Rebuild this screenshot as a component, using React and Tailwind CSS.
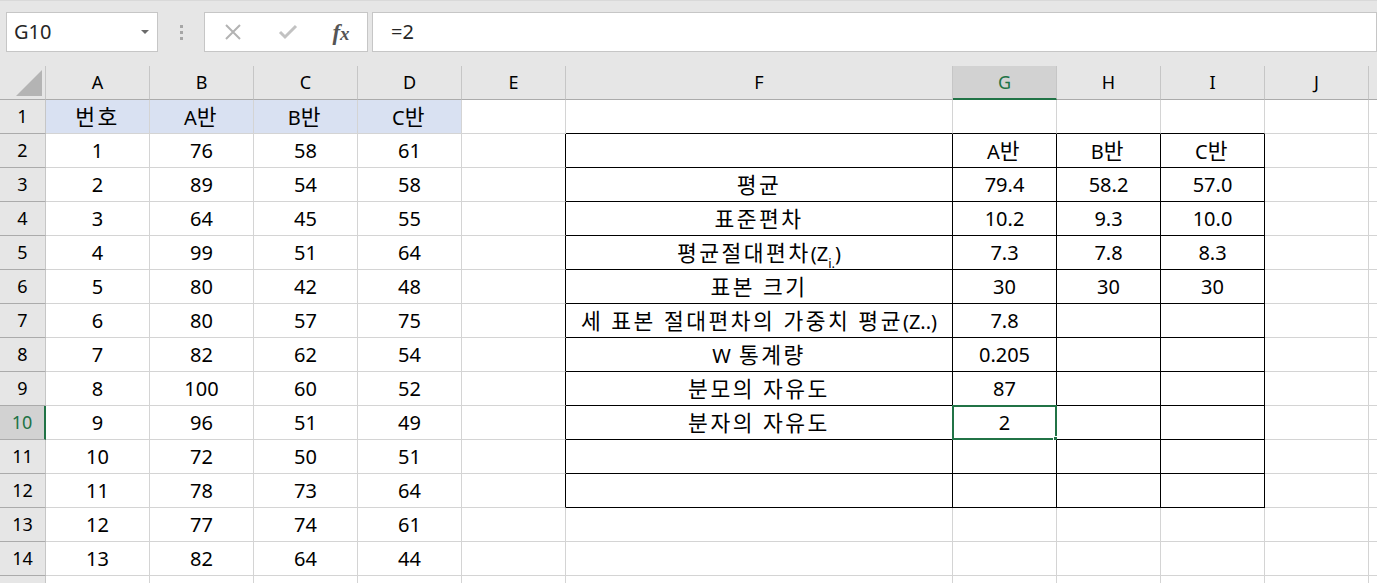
import React from "react";

const FONT = { fontFamily: '"Noto Sans", "Noto Sans CJK KR", sans-serif' };

const colKeys = ["A", "B", "C", "D", "E", "F", "G", "H", "I", "J", "K"];

const left = {
  A: ["번호", "1", "2", "3", "4", "5", "6", "7", "8", "9", "10", "11", "12", "13"],
  B: ["A반", "76", "89", "64", "99", "80", "80", "82", "100", "96", "72", "78", "77", "82"],
  C: ["B반", "58", "54", "45", "51", "42", "57", "62", "60", "51", "50", "73", "74", "64"],
  D: ["C반", "61", "58", "55", "64", "48", "75", "54", "52", "49", "51", "64", "61", "44"],
};

const labels = [
  "",
  "평균",
  "표준편차",
  "zi",
  "표본 크기",
  "세 표본 절대편차의 가중치 평균(Z..)",
  "W 통계량",
  "분모의 자유도",
  "분자의 자유도",
  "",
  "",
];

const stats = {
  G: ["A반", "79.4", "10.2", "7.3", "30", "7.8", "0.205", "87", "2", "", ""],
  H: ["B반", "58.2", "9.3", "7.8", "30", "", "", "", "", "", ""],
  I: ["C반", "57.0", "10.0", "8.3", "30", "", "", "", "", "", ""],
};

const inTable = (r, c) => r >= 2 && r <= 12 && ["F", "G", "H", "I"].includes(c);

// Hangul glyphs in the sheet run a bit wider than the latin ones
function Txt({ s }) {
  return s.split(/([가-힣 ]+)/).map((part, i) =>
    /[가-힣]/.test(part) ? (
      <span key={i} className="text-[21.5px] tracking-[2.5px]">
        {part}
      </span>
    ) : (
      <span key={i}>{part}</span>
    )
  );
}

function cellValue(r, c) {
  if (left[c]) return <Txt s={left[c][r - 1] || ""} />;
  if (r >= 2 && r <= 12) {
    if (c === "F") {
      const t = labels[r - 2];
      if (t === "zi")
        return (
          <span>
            <Txt s="평균절대편차" />
            (Z<sub className="text-[13px] align-[-4px]">i.</sub>)
          </span>
        );
      return <Txt s={t} />;
    }
    if (stats[c]) return <Txt s={stats[c][r - 2]} />;
  }
  return "";
}

function Cell({ r, c }) {
  const rightBlack = inTable(r, c) || (c === "E" && r >= 2 && r <= 12);
  const bottomBlack = inTable(r, c) || (r === 1 && ["F", "G", "H", "I"].includes(c));
  const blue = r === 1 && ["A", "B", "C", "D"].includes(c);
  const selected = r === 10 && c === "G";
  return (
    <div
      className={`relative h-[34px] flex items-center justify-center border-r border-b text-[20px] text-black whitespace-nowrap ${
        rightBlack ? "border-r-black" : "border-r-[#d4d4d4]"
      } ${bottomBlack ? "border-b-black" : "border-b-[#d4d4d4]"} ${
        blue ? "bg-[#d9e1f2]" : "bg-white"
      }`}
    >
      <span className="leading-none">{cellValue(r, c)}</span>
      {selected && (
        <>
          <div className="absolute -left-px -top-px w-[105px] h-[35px] border-2 border-[#217346]" />
          <div className="absolute -right-[4px] -bottom-[4px] w-[7px] h-[7px] bg-[#217346] border border-white" />
        </>
      )}
    </div>
  );
}

export default function App() {
  const rows = Array.from({ length: 14 }, (_, i) => i + 1);
  return (
    <div className="w-[1377px] h-[583px] overflow-hidden bg-white select-none" style={FONT}>
      {/* formula bar */}
      <div className="h-[66px] bg-[#e6e6e6] flex items-start pt-[11px] pl-[6px] border-t border-[#d9d9d9]">
        <div className="w-[152px] h-[40px] bg-white border border-[#c6c6c6] flex items-center justify-between pl-[7px] pr-[8px]">
          <span className="text-[20px] text-[#262626]">G10</span>
          <svg width="8" height="5" viewBox="0 0 8 5">
            <path d="M0 0 L8 0 L4 4 Z" fill="#6b6b6b" />
          </svg>
        </div>
        <div className="w-[46px] h-[40px] flex items-center justify-center">
          <div className="flex flex-col gap-[3px]">
            <div className="w-[3px] h-[3px] bg-[#a6a6a6]" />
            <div className="w-[3px] h-[3px] bg-[#a6a6a6]" />
            <div className="w-[3px] h-[3px] bg-[#a6a6a6]" />
          </div>
        </div>
        <div className="w-[164px] h-[40px] bg-white border border-[#c6c6c6] flex items-center">
          <div className="w-[56px] flex justify-center">
            <svg width="18" height="18" viewBox="0 0 18 18">
              <path d="M2 2 L16 16 M16 2 L2 16" stroke="#b3b3b3" strokeWidth="2" fill="none" />
            </svg>
          </div>
          <div className="w-[54px] flex justify-center">
            <svg width="20" height="16" viewBox="0 0 20 16">
              <path d="M2 8 L7 13 L18 2" stroke="#c2c2c2" strokeWidth="3" fill="none" />
            </svg>
          </div>
          <div className="w-[52px] flex justify-center">
            <span
              className="text-[23px] italic text-[#555] font-bold leading-none"
              style={{ fontFamily: '"Liberation Serif", serif' }}
            >
              f<span className="text-[19px]">x</span>
            </span>
          </div>
        </div>
        <div className="ml-[4px] flex-1 h-[40px] bg-white border border-[#c6c6c6] flex items-center pl-[18px]">
          <span className="text-[20px] text-[#262626]">=2</span>
        </div>
      </div>

      {/* grid */}
      <div className="grid grid-cols-[46px_104px_104px_104px_104px_104px_387px_104px_104px_104px_104px_104px]">
        {/* header row */}
        <div className="h-[34px] bg-[#e6e6e6] border-b border-r border-b-[#ababab] border-r-[#c6c6c6] flex items-end justify-end pr-[3px] pb-[3px]">
          <svg width="26" height="26" viewBox="0 0 26 26">
            <path d="M26 0 L26 26 L0 26 Z" fill="#b4b4b4" />
          </svg>
        </div>
        {colKeys.map((c) =>
          c === "G" ? (
            <div
              key={c}
              className="h-[34px] bg-[#d2d2d2] border-r border-r-[#c6c6c6] border-b-2 border-b-[#217346] flex items-center justify-center text-[18px] text-[#217346]"
            >
              {c}
            </div>
          ) : (
            <div
              key={c}
              className="h-[34px] bg-[#e6e6e6] border-r border-b border-r-[#c6c6c6] border-b-[#ababab] flex items-center justify-center text-[18px] text-black"
            >
              {c === "K" ? "" : c}
            </div>
          )
        )}
        {rows.map((r) => (
          <React.Fragment key={r}>
            {r === 10 ? (
              <div className="h-[34px] bg-[#d2d2d2] border-b border-b-[#ababab] border-r-2 border-r-[#217346] flex items-center justify-center text-[18px] text-[#217346]">
                {r}
              </div>
            ) : (
              <div className="h-[34px] bg-[#e6e6e6] border-b border-r border-b-[#ababab] border-r-[#c6c6c6] flex items-center justify-center text-[18px] text-black">
                {r}
              </div>
            )}
            {colKeys.map((c) => (
              <Cell key={c} r={r} c={c} />
            ))}
          </React.Fragment>
        ))}
        {/* partial row 15 */}
        <div className="h-[34px] bg-[#e6e6e6] border-r border-r-[#c6c6c6]" />
        {colKeys.map((c) => (
          <div key={c} className="h-[34px] bg-white border-r border-r-[#d4d4d4]" />
        ))}
      </div>
    </div>
  );
}
